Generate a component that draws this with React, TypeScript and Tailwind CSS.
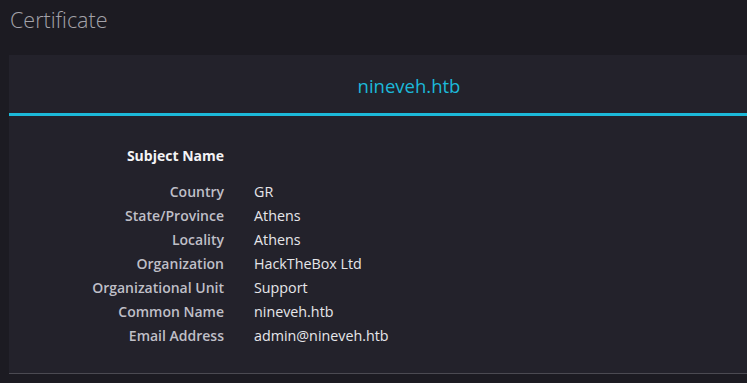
import React from "react";

const rows: [string, string][] = [
  ["Country", "GR"],
  ["State/Province", "Athens"],
  ["Locality", "Athens"],
  ["Organization", "HackTheBox Ltd"],
  ["Organizational Unit", "Support"],
  ["Common Name", "nineveh.htb"],
  ["Email Address", "admin@nineveh.htb"],
];

export default function App() {
  return (
    <div
      className="w-[747px] h-[383px] overflow-hidden bg-[#1c1b22] pl-[9px]"
      style={{ fontFamily: '"Open Sans", "Noto Sans", sans-serif' }}
    >
      <h1 className="h-[55px] pt-[5px] pl-px text-[21.5px] font-light text-[#a4a3aa] leading-[30px]">
        Certificate
      </h1>
      <div className="bg-[#23222b] w-[800px] h-[319px] border-b border-[#4b4a52]">
        <div className="h-[61px] flex items-center justify-center border-b-[3px] border-[#1cb9d9]">
          <span className="text-[18.5px] text-[#1cb9d9] pt-[3px]">nineveh.htb</span>
        </div>
        <div className="pt-[28px] text-[14px] leading-[24px]">
          <div className="grid grid-cols-[215px_1fr] gap-x-[30px]">
            <div className="text-right font-bold text-[#f4f4f6]">Subject Name</div>
            <div />
          </div>
          <div className="grid grid-cols-[215px_1fr] gap-x-[30px] mt-[12px]">
            {rows.map(([k, v]) => (
              <React.Fragment key={k}>
                <div className="text-right font-semibold text-[#bfbfc7]">{k}</div>
                <div className="text-[#e6e6ea] text-[14.3px]">{v}</div>
              </React.Fragment>
            ))}
          </div>
        </div>
      </div>
    </div>
  );
}
